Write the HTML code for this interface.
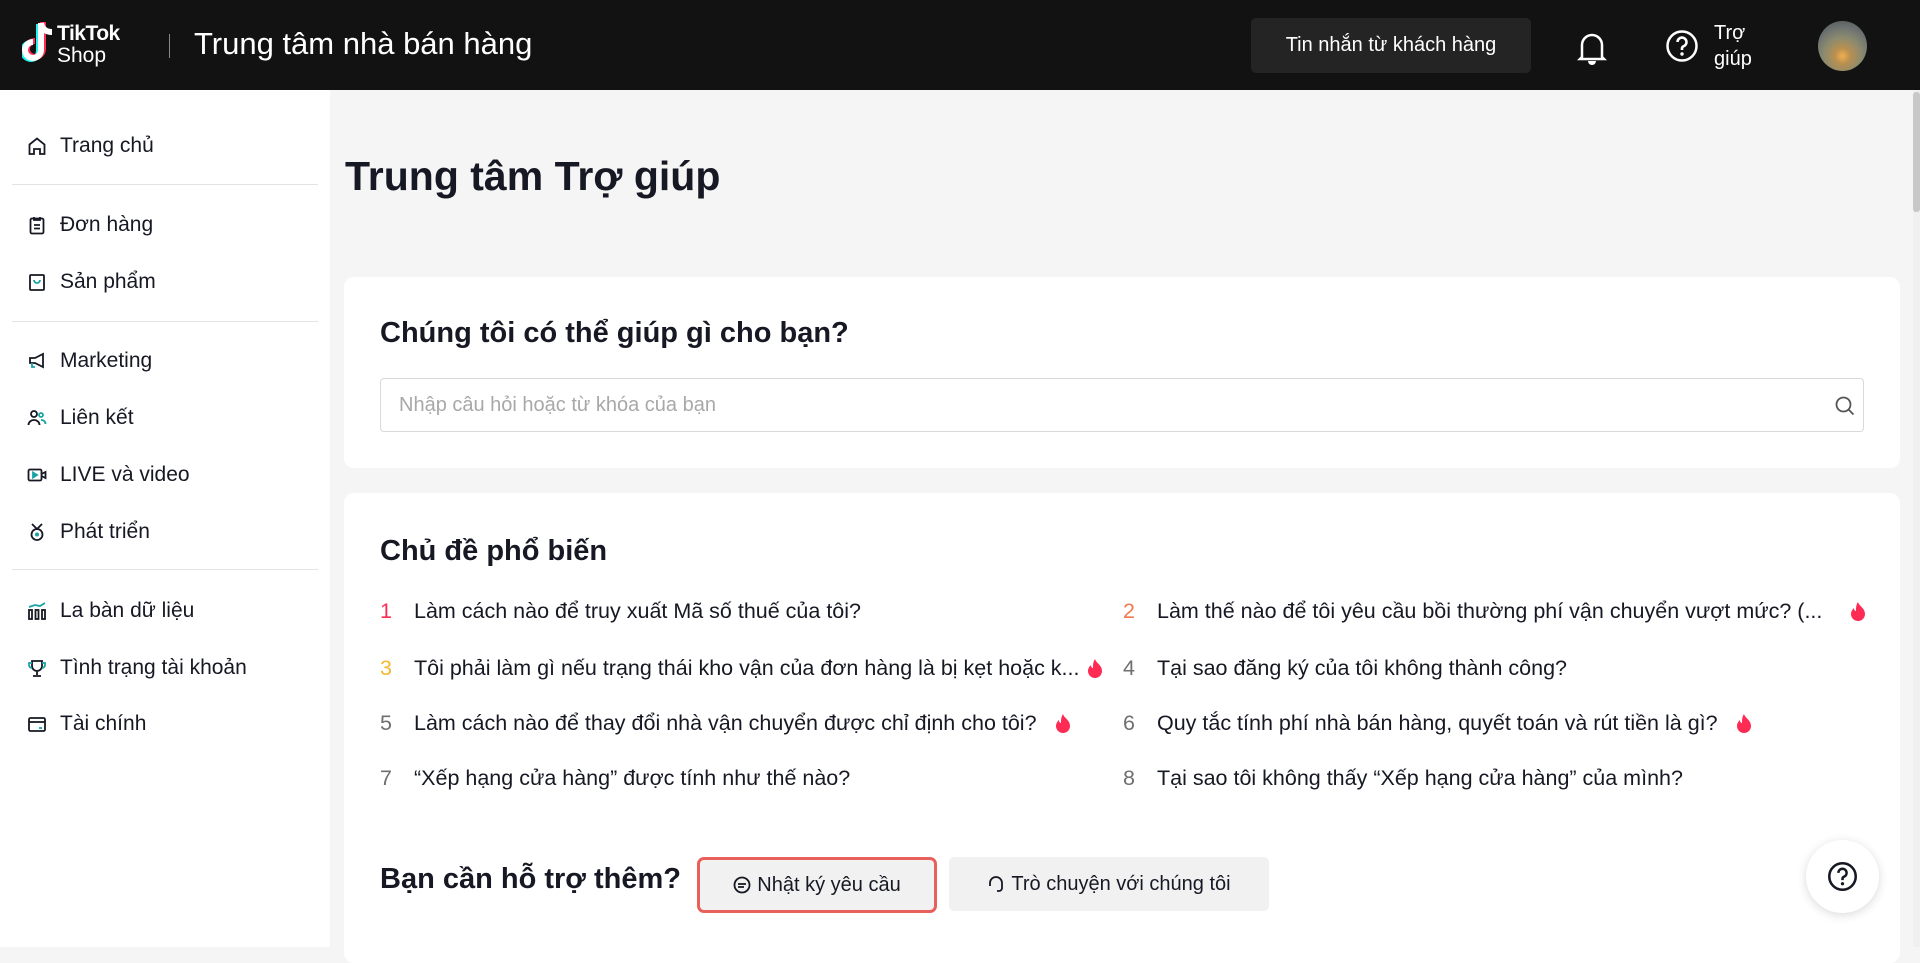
<!DOCTYPE html>
<html><head><meta charset="utf-8"><style>
*{margin:0;padding:0;box-sizing:border-box}
body{width:1920px;height:947px;overflow:hidden;background:#f5f5f5;font-family:"Liberation Sans","Noto Sans CJK SC",sans-serif;color:#161823;position:relative}
.hdr{position:absolute;left:0;top:0;width:1920px;height:90px;background:#121212;color:#fff}
.sb{position:absolute;left:0;top:90px;width:330px;height:857px;background:#fff}
.it{position:absolute;left:27px;font-size:21px;display:flex;align-items:center;height:30px}
.it svg{width:20px;height:20px;margin-right:13px}
.dv{position:absolute;left:12px;width:306px;height:1px;background:#e3e3e3}
.card{position:absolute;left:344px;width:1556px;background:#fff;border-radius:10px}
.row{position:absolute;font-size:21.5px;display:flex;align-items:center;white-space:nowrap}
.row .n{display:inline-block;width:34px;color:#6f6f6f}
.fire{display:inline-block;width:16px;height:20px;margin-left:18px}
.btn{position:absolute;background:#f1f1f1;border-radius:5px;font-size:20px;display:flex;align-items:center;justify-content:center}
.h2{position:absolute;left:36px;font-size:29px;font-weight:bold}
</style></head><body>
<div class="hdr">
 <svg style="position:absolute;left:22px;top:20px" width="36" height="46" viewBox="0 0 36 46"><path d="M19 3v27a8 8 0 1 1-8-8" fill="none" stroke="#25f4ee" stroke-width="6" transform="translate(-2,1)"/><path d="M19 3v27a8 8 0 1 1-8-8" fill="none" stroke="#fe2c55" stroke-width="6" transform="translate(2,-1)"/><path d="M19 3v27a8 8 0 1 1-8-8M19 3c1 6 5 9 11 9" fill="none" stroke="#fff" stroke-width="6"/></svg>
 <div style="position:absolute;left:57px;top:24px;font-size:21px;font-weight:bold;line-height:20px;letter-spacing:-0.5px">TikTok</div>
 <div style="position:absolute;left:57px;top:46px;font-size:21px;line-height:20px">Shop</div>
 <div style="position:absolute;left:169px;top:34px;width:1px;height:24px;background:#888"></div>
 <div style="position:absolute;left:194px;top:26px;font-size:31px;font-weight:500">Trung tâm nhà bán hàng</div>
 <div style="position:absolute;left:1251px;top:18px;width:280px;height:55px;background:#242424;border-radius:5px;font-size:20px;display:flex;align-items:center;justify-content:center">Tin nhắn từ khách hàng</div>
 <svg style="position:absolute;left:1576px;top:30px" width="32" height="36" viewBox="0 0 32 36"><path d="M6 27V15a10 10 0 0 1 20 0v12l2 2H4z" fill="none" stroke="#fff" stroke-width="2.5"/><path d="M12 31h8a4 4 0 0 1-8 0" fill="#fff"/></svg>
 <svg style="position:absolute;left:1665px;top:29px" width="34" height="34" viewBox="0 0 34 34"><circle cx="17" cy="17" r="14.5" fill="none" stroke="#fff" stroke-width="2.5"/><path d="M12.5 13a4.5 4.5 0 1 1 6 4.3c-1 .4-1.5 1.2-1.5 2.2v1.5" fill="none" stroke="#fff" stroke-width="2.6"/><circle cx="17" cy="25" r="1.7" fill="#fff"/></svg>
 <div style="position:absolute;left:1714px;top:20px;font-size:20px;line-height:26px">Trợ<br>giúp</div>
 <div style="position:absolute;left:1818px;top:21px;width:49px;height:50px;border-radius:50%;background:radial-gradient(circle at 50% 70%,#f0b050 0,#b99050 18%,#8a8a70 45%,#6a7070 70%,#4a5048 100%)"></div>
</div>
<div style="position:absolute;left:1913px;top:90px;width:7px;height:857px;background:#f0f0f0"></div>
<div style="position:absolute;left:1913px;top:92px;width:7px;height:120px;background:#c8c8c8;border-radius:3px"></div>
<div class="sb">
 <div class="it" style="top:41px"><svg viewBox="0 0 20 20" fill="none" stroke="#161823" stroke-width="1.8"><path d="M2.5 8.5L10 2.5l7.5 6V18h-4.5v-5h-6v5H2.5z"/></svg>Trang chủ</div>
 <div class="dv" style="top:94px"></div>
 <div class="it" style="top:120px"><svg viewBox="0 0 20 20" fill="none" stroke="#161823" stroke-width="1.8"><rect x="3.5" y="3.5" width="13" height="15" rx="1.5"/><path d="M7 2v3h6V2M7 10h6M7 13.5h6" stroke="#161823"/></svg>Đơn hàng</div>
 <div class="it" style="top:177px"><svg viewBox="0 0 20 20" fill="none" stroke="#161823" stroke-width="1.8"><rect x="3" y="3" width="14" height="15" rx="1"/><path d="M7 8a3 3 0 0 0 6 0" stroke="#1aa3a3"/></svg>Sản phẩm</div>
 <div class="dv" style="top:231px"></div>
 <div class="it" style="top:256px"><svg viewBox="0 0 20 20" fill="none" stroke="#161823" stroke-width="1.8"><path d="M3 7h5l8-4v13l-8-4H3z"/><path d="M5 12v4h3" stroke="#1aa3a3"/></svg>Marketing</div>
 <div class="it" style="top:313px"><svg viewBox="0 0 20 20" fill="none" stroke="#161823" stroke-width="1.8"><circle cx="7" cy="6" r="3"/><path d="M1.5 17a5.5 5 0 0 1 11 0"/><circle cx="14" cy="7" r="2" stroke="#1aa3a3"/><path d="M14 12a4 4 0 0 1 4.5 4" stroke="#1aa3a3"/></svg>Liên kết</div>
 <div class="it" style="top:370px"><svg viewBox="0 0 20 20" fill="none" stroke="#161823" stroke-width="1.8"><rect x="1.5" y="4.5" width="13" height="11" rx="1.5"/><path d="M14.5 9l4-2v6l-4-2"/><path d="M6 7.5v5l4-2.5z" fill="#1aa3a3" stroke="#1aa3a3"/></svg>LIVE và video</div>
 <div class="it" style="top:427px"><svg viewBox="0 0 20 20" fill="none" stroke="#161823" stroke-width="1.8"><circle cx="10" cy="12.5" r="5.5"/><path d="M5 2l5 5 5-5"/><circle cx="10" cy="12.5" r="2" fill="#1aa3a3" stroke="none"/></svg>Phát triển</div>
 <div class="dv" style="top:479px"></div>
 <div class="it" style="top:506px"><svg viewBox="0 0 20 20" fill="none" stroke="#161823" stroke-width="1.8"><rect x="2" y="9" width="3" height="9"/><rect x="8.5" y="9" width="3" height="9"/><rect x="15" y="9" width="3" height="9"/><path d="M2 6l6-2 5 1 5-3" stroke="#1aa3a3"/></svg>La bàn dữ liệu</div>
 <div class="it" style="top:563px"><svg viewBox="0 0 20 20" fill="none" stroke="#161823" stroke-width="1.8"><path d="M5 3h10v5a5 5 0 0 1-10 0zM10 13v4M6 18h8"/><path d="M5 5H2v2a3 3 0 0 0 3 3M15 5h3v2a3 3 0 0 1-3 3" stroke="#1aa3a3"/></svg>Tình trạng tài khoản</div>
 <div class="it" style="top:619px"><svg viewBox="0 0 20 20" fill="none" stroke="#161823" stroke-width="1.8"><rect x="2" y="4" width="16" height="13" rx="1.5"/><path d="M2 8h16"/><path d="M12 14h3" stroke="#1aa3a3"/></svg>Tài chính</div>
</div>
<div style="position:absolute;left:345px;top:153px;font-size:41px;font-weight:bold">Trung tâm Trợ giúp</div>
<div class="card" style="top:277px;height:191px">
 <div class="h2" style="top:40px">Chúng tôi có thể giúp gì cho bạn?</div>
 <div style="position:absolute;left:36px;top:101px;width:1484px;height:54px;border:1px solid #d9d9d9;border-radius:4px">
  <div style="position:absolute;left:18px;top:15px;font-size:20px;color:#a8a8a8">Nhập câu hỏi hoặc từ khóa của bạn</div>
  <svg style="position:absolute;left:1453px;top:16px" width="22" height="22" viewBox="0 0 22 22" fill="none" stroke="#555" stroke-width="1.8"><circle cx="9.5" cy="9.5" r="7"/><path d="M14.5 14.5l5 5"/></svg>
 </div>
</div>
<div class="card" style="top:493px;height:470px">
 <div class="h2" style="top:42px">Chủ đề phổ biến</div>
 <div class="row" style="left:36px;top:106px"><span class="n" style="color:#fe2c55">1</span>Làm cách nào để truy xuất Mã số thuế của tôi?</div>
 <div class="row" style="left:779px;top:106px"><span class="n" style="color:#f27a4d">2</span>Làm thế nào để tôi yêu cầu bồi thường phí vận chuyển vượt mức? (...<svg class="fire" style="margin-left:28px" viewBox="0 0 16 20"><path d="M8 0c1 4 7 6 7 12a7 7 0 0 1-14 0c0-3 2-5 3-6 0 2 1 3 2 3C6 6 6 3 8 0z" fill="#fe2c55"/></svg></div>
 <div class="row" style="left:36px;top:163px"><span class="n" style="color:#f5b82e">3</span>Tôi phải làm gì nếu trạng thái kho vận của đơn hàng là bị kẹt hoặc k...<svg class="fire" style="margin-left:8px" viewBox="0 0 16 20"><path d="M8 0c1 4 7 6 7 12a7 7 0 0 1-14 0c0-3 2-5 3-6 0 2 1 3 2 3C6 6 6 3 8 0z" fill="#fe2c55"/></svg></div>
 <div class="row" style="left:779px;top:163px"><span class="n">4</span>Tại sao đăng ký của tôi không thành công?</div>
 <div class="row" style="left:36px;top:218px"><span class="n">5</span>Làm cách nào để thay đổi nhà vận chuyển được chỉ định cho tôi?<svg class="fire" viewBox="0 0 16 20"><path d="M8 0c1 4 7 6 7 12a7 7 0 0 1-14 0c0-3 2-5 3-6 0 2 1 3 2 3C6 6 6 3 8 0z" fill="#fe2c55"/></svg></div>
 <div class="row" style="left:779px;top:218px"><span class="n">6</span>Quy tắc tính phí nhà bán hàng, quyết toán và rút tiền là gì?<svg class="fire" viewBox="0 0 16 20"><path d="M8 0c1 4 7 6 7 12a7 7 0 0 1-14 0c0-3 2-5 3-6 0 2 1 3 2 3C6 6 6 3 8 0z" fill="#fe2c55"/></svg></div>
 <div class="row" style="left:36px;top:273px"><span class="n">7</span>“Xếp hạng cửa hàng” được tính như thế nào?</div>
 <div class="row" style="left:779px;top:273px"><span class="n">8</span>Tại sao tôi không thấy “Xếp hạng cửa hàng” của mình?</div>
 <div class="h2" style="top:370px">Bạn cần hỗ trợ thêm?</div>
 <div class="btn" style="left:353px;top:364px;width:240px;height:56px;border:3px solid #e8605c;border-radius:7px"><svg width="18" height="18" viewBox="0 0 18 18" fill="none" stroke="#161823" stroke-width="1.8" style="margin-right:6px"><circle cx="9" cy="9" r="7.5"/><path d="M5 8h8M5 11h6"/></svg>Nhật ký yêu cầu</div>
 <div class="btn" style="left:605px;top:364px;width:320px;height:54px"><svg width="18" height="20" viewBox="0 0 18 20" fill="none" stroke="#161823" stroke-width="1.8" style="margin-right:6px"><path d="M3 12V9a6 6 0 0 1 12 0v3M15 12v2a3 3 0 0 1-3 3h-2"/></svg>Trò chuyện với chúng tôi</div>
</div>
<div style="position:absolute;left:1806px;top:840px;width:73px;height:73px;border-radius:50%;background:#fff;box-shadow:0 2px 10px rgba(0,0,0,.15)">
 <svg style="position:absolute;left:21px;top:21px" width="31" height="31" viewBox="0 0 34 34"><circle cx="17" cy="17" r="14.5" fill="none" stroke="#161823" stroke-width="2.8"/><path d="M12.5 13a4.5 4.5 0 1 1 6 4.3c-1 .4-1.5 1.2-1.5 2.2v1.5" fill="none" stroke="#161823" stroke-width="2.8"/><circle cx="17" cy="25" r="1.8" fill="#161823"/></svg>
</div>
</body></html>
